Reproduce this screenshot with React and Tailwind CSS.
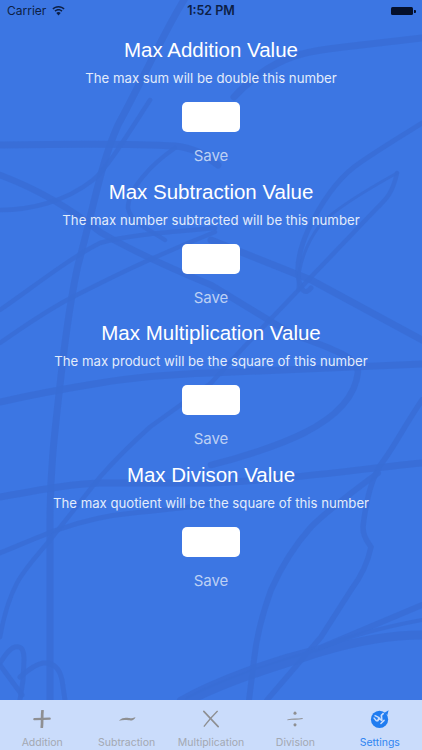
import React from "react";

const strokes = [
  ["M184 0C165 30 140 85 118 125C100 165 92 215 78 265C68 310 64 350 60 385C55 430 50 470 50 520L50 700", 7],
  ["M0 145C60 144 130 143 175 146C195 148 205 155 218 165", 7],
  ["M175 148C150 165 128 190 128 208C130 222 150 230 165 240", 4.5],
  ["M0 175C40 190 75 212 100 232C130 250 175 270 211 285L290 333C320 345 358 355 358 372C355 400 330 420 304 433C280 445 240 458 211 465", 6.5],
  ["M211 240L311 280L422 340", 7],
  ["M0 210C30 210 65 202 93 180C105 170 118 150 150 100", 4.5],
  ["M0 310C40 282 70 258 100 243C130 234 175 232 215 228", 4.5],
  ["M0 343C30 322 45 312 67 300C110 278 150 258 215 232", 4.5],
  ["M0 402C40 393 75 387 100 383C140 376 180 374 211 373L422 364", 7],
  ["M0 497C40 490 70 484 100 483L211 483C290 480 350 470 422 463", 7],
  ["M0 553C20 545 40 536 57 530C85 520 110 515 133 513C160 510 190 508 215 503", 5],
  ["M397 173C392 195 385 200 378 207L311 277L244 347L211 383L150 427C130 445 115 460 100 477L50 540C35 558 25 568 17 583C8 600 3 620 0 637", 4.5],
  ["M422 123C395 140 370 155 354 167C335 182 320 205 308 230C300 248 297 262 298 275C300 290 305 296 311 288", 5],
  ["M397 173C370 188 335 208 320 225C305 245 298 265 298 290", 3],
  ["M234 97C245 85 260 72 278 63C300 52 320 50 344 47L422 38", 7],
  ["M422 400C405 425 395 445 384 460C372 475 366 500 363 527C363 538 368 542 371 547C368 562 360 578 351 590L321 637L267 700", 5.5],
  ["M378 473C355 490 330 508 311 527C295 545 282 565 271 590C262 615 256 640 254 660L249 700", 6],
  ["M180 700C215 680 270 660 320 648L422 605", 6],
  ["M190 700C230 680 270 668 320 652C360 640 395 635 422 635", 9],
  ["M320 648C360 632 395 625 422 620", 4],
  ["M0 663C5 655 10 648 15 647C22 646 24 650 24 660L23 680L20 700", 5],
  ["M0 665L22 695", 5],
  ["M20 677C28 670 36 664 43 663C55 662 60 670 62 680L65 700", 5],
];

function Section({ title, sub }) {
  return (
    <section className="flex h-[141.6px] flex-col items-center">
      <h2 className="mt-[14px] h-[28px] shrink-0 font-['Liberation_Sans',sans-serif] text-[20.5px] leading-[28px] font-normal text-white">{title}</h2>
      <p className="mt-[4px] h-[20px] shrink-0 text-[13.2px] leading-[20px] text-[#e3ecfb]">{sub}</p>
      <div className="mt-[14px] h-[30px] w-[58px] shrink-0 rounded-[5px] bg-white" />
      <button className="mt-[17px] h-[14px] shrink-0 text-[15px] leading-[14px] text-[#bcd0f4]">Save</button>
    </section>
  );
}

function Tab({ label, active, children }) {
  return (
    <div className="flex flex-col items-center">
      <div className="mt-[7px] flex h-[24px] w-[24px] items-center justify-center">{children}</div>
      <span className={`mt-[6px] text-[10.5px] leading-[12px] ${active ? "text-[#2f85f2]" : "text-[#a3a8b2]"}`}>{label}</span>
    </div>
  );
}

export default function App() {
  return (
    <div className="relative flex h-[750px] w-[422px] flex-col overflow-hidden bg-[#3c76e3] font-['Inter','Liberation_Sans',sans-serif]">
      <svg className="absolute top-0 left-0" width="422" height="700" viewBox="0 0 422 700" fill="none" aria-hidden="true">
        {strokes.map(([d, w], i) => (
          <path key={i} d={d} stroke="#386dd6" strokeWidth={w} strokeLinecap="round" opacity="0.85" />
        ))}
      </svg>

      <header className="relative flex h-[22px] items-center justify-between pr-[6px] pl-[7px] text-[#0d1f45]">
        <div className="flex items-center gap-[6px]">
          <span className="text-[12px]">Carrier</span>
          <svg width="13" height="10" viewBox="0 0 13 10" fill="#0d1f45">
            <path d="M6.5 0C4 0 1.9 1 .4 2.4l1 1.1C2.7 2.3 4.5 1.5 6.5 1.5s3.8.8 5.1 2l1-1.1C11.1 1 9 0 6.5 0z" />
            <path d="M6.5 3C5 3 3.6 3.6 2.5 4.6l1 1.1C4.3 5 5.3 4.5 6.5 4.5s2.2.5 3 1.2l1-1.1C9.4 3.6 8 3 6.5 3z" />
            <path d="M6.5 6c-.9 0-1.6.3-2.2.9L6.5 9.5l2.2-2.6C8.1 6.3 7.4 6 6.5 6z" />
          </svg>
        </div>
        <span className="absolute left-1/2 -translate-x-1/2 text-[12.5px] font-semibold">1:52 PM</span>
        <div className="flex items-center gap-[1px]">
          <div className="h-[8px] w-[22px] rounded-[1.5px] bg-[#05102b]" />
          <div className="h-[3px] w-[2px] rounded-r-[1px] bg-[#05102b]" />
        </div>
      </header>

      <main className="relative flex-1">
        <Section title="Max Addition Value" sub="The max sum will be double this number" />
        <Section title="Max Subtraction Value" sub="The max number subtracted will be this number" />
        <Section title="Max Multiplication Value" sub="The max product will be the square of this number" />
        <Section title="Max Divison Value" sub="The max quotient will be the square of this number" />
      </main>

      <nav className="relative grid h-[50px] grid-cols-5 bg-[#cadcfb]">
        <Tab label="Addition">
          <svg width="18" height="18" viewBox="0 0 20 20" fill="none" stroke="#8e8f92" strokeLinecap="round">
            <path d="M1.5 10.2C7 9.5 13 10 18.5 9.6" strokeWidth="2.6" />
            <path d="M10.5 1C9.8 7 10.5 13 9.8 19" strokeWidth="3" />
          </svg>
        </Tab>
        <Tab label="Subtraction">
          <svg width="18" height="18" viewBox="0 0 20 20" fill="#8e8f92">
            <path d="M1 12C5 8 9 8.5 12 9C15 9.5 17 8.5 19.5 8C18 11.500 15 12 12 11.500C8 11 5 11 1 12z" />
          </svg>
        </Tab>
        <Tab label="Multiplication">
          <svg width="18" height="18" viewBox="0 0 20 20" fill="none" stroke="#8e8f92" strokeLinecap="round">
            <path d="M2 1.5L18 18.5" strokeWidth="1.8" />
            <path d="M17 1.5C12 6.5 7 12 2.5 18" strokeWidth="1.5" />
          </svg>
        </Tab>
        <Tab label="Division">
          <svg width="18" height="18" viewBox="0 0 20 20" fill="#8e8f92" stroke="none">
            <circle cx="10" cy="3.5" r="1.7" />
            <circle cx="10" cy="16.5" r="1.7" />
            <path d="M1.5 10.5C7 9.2 13 10 18.5 9l0 1C13 11 7 10.4 1.5 11.500z" />
          </svg>
        </Tab>
        <Tab label="Settings" active>
          <svg width="20" height="20" viewBox="0 0 22 22">
            <circle cx="10.5" cy="11.5" r="9.500" fill="#1f7cf0" />
            <path d="M16 4L20.5 1.5L19 7z" fill="#1f7cf0" />
            <path d="M5 7L10 9.5L8.5 13L10 10.5L13 12.5L12.5 7L15 4.5" fill="none" stroke="#cadcfb" strokeWidth="1.8" strokeLinejoin="round" />
            <path d="M4.500 10L7 13M12 16L15.5 12.5" fill="none" stroke="#cadcfb" strokeWidth="1.6" strokeLinecap="round" />
          </svg>
        </Tab>
      </nav>
    </div>
  );
}
